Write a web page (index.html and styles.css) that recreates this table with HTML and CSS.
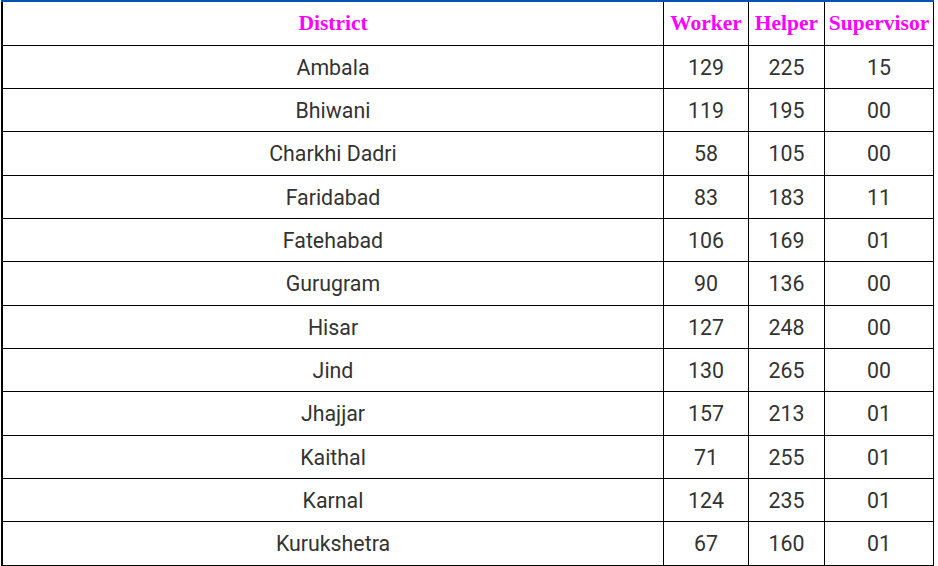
FILE: index.html
```html
<!DOCTYPE html>
<html>
<head>
<meta charset="utf-8">
<link rel="stylesheet" href="styles.css">
</head>
<body>
<table class="dist-table">
  <thead>
    <tr>
      <th class="c-district">District</th>
      <th class="c-worker">Worker</th>
      <th class="c-helper">Helper</th>
      <th class="c-super">Supervisor</th>
    </tr>
  </thead>
  <tbody>
    <tr><td>Ambala</td><td>129</td><td>225</td><td>15</td></tr>
    <tr><td>Bhiwani</td><td>119</td><td>195</td><td>00</td></tr>
    <tr><td>Charkhi Dadri</td><td>58</td><td>105</td><td>00</td></tr>
    <tr><td>Faridabad</td><td>83</td><td>183</td><td>11</td></tr>
    <tr><td>Fatehabad</td><td>106</td><td>169</td><td>01</td></tr>
    <tr><td>Gurugram</td><td>90</td><td>136</td><td>00</td></tr>
    <tr><td>Hisar</td><td>127</td><td>248</td><td>00</td></tr>
    <tr><td>Jind</td><td>130</td><td>265</td><td>00</td></tr>
    <tr><td>Jhajjar</td><td>157</td><td>213</td><td>01</td></tr>
    <tr><td>Kaithal</td><td>71</td><td>255</td><td>01</td></tr>
    <tr><td>Karnal</td><td>124</td><td>235</td><td>01</td></tr>
    <tr><td>Kurukshetra</td><td>67</td><td>160</td><td>01</td></tr>
  </tbody>
</table>
</body>
</html>
```

FILE: styles.css
```css
html, body {
  margin: 0;
  padding: 0;
  background: #ffffff;
}

.dist-table {
  margin-left: 1px;
  border-collapse: collapse;
  table-layout: fixed;
  width: 932px;
  border-top: 2px solid #0a50b4;
  border-left: 2px solid #000000;
}

.dist-table th,
.dist-table td {
  border: 1px solid #000000;
  text-align: center;
  white-space: nowrap;
}

.dist-table th {
  font-family: "Liberation Serif", "Times New Roman", serif;
  font-weight: bold;
  font-size: 21.5px;
  color: #ff00ff;
  height: 42.6px;
  line-height: 42.6px;
  padding: 0;
  border-top: 2px solid #0a50b4;
}

.dist-table td {
  font-family: Roboto, "Noto Sans", sans-serif;
  font-size: 21.33px;
  color: #333333;
  height: 41.33px;
  line-height: 41.33px;
  padding: 1px 0 0 0;
}

.c-district { width: 660px; }
.c-worker { width: 84px; }
.c-helper { width: 75px; }
.c-super { width: 108px; }
```
